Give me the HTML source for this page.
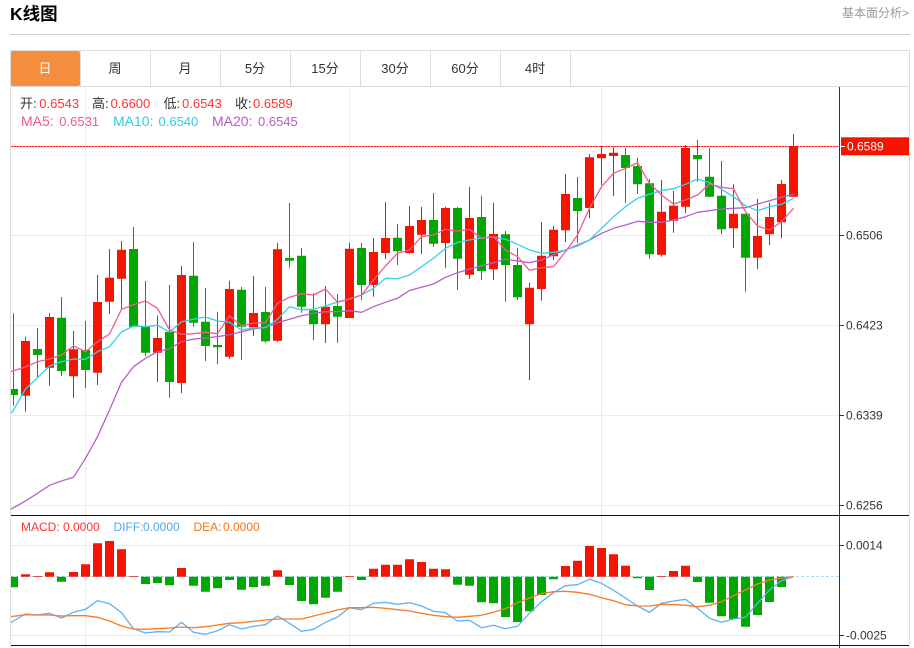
<!DOCTYPE html>
<html lang="zh">
<head>
<meta charset="utf-8">
<title>K线图</title>
<style>
html,body{margin:0;padding:0;background:#fff;width:914px;height:648px;overflow:hidden}
svg{display:block}
text{font-family:"Liberation Sans","Noto Sans CJK SC",sans-serif;font-size:12px;fill:#333}
.l{font-size:13px}
.tab{font-size:13px;text-anchor:middle}
.m{font-size:14px}
.ln{fill:none;stroke-width:1.3;stroke-linejoin:round}
</style>
</head>
<body>
<svg width="914" height="648" viewBox="0 0 914 648" xmlns="http://www.w3.org/2000/svg">
<text x="10" y="20" style="font-size:17.5px;font-weight:bold;fill:#000">K线图</text>
<text x="842" y="17" style="fill:#999">基本面分析&gt;</text>
<path d="M10 34.5H910" stroke="#ccc" fill="none"/>

<!-- frame -->
<path d="M10.5 648V50.5H909.5V648M10.5 86.5H909.5" stroke="#ddd" fill="none"/>
<path d="M80.5 51V86M150.5 51V86M220.5 51V86M290.5 51V86M360.5 51V86M430.5 51V86M500.5 51V86M570.5 51V86" stroke="#ddd" fill="none"/>
<rect x="11" y="51" width="69" height="35" rx="2" fill="#f58d3e"/>
<text class="tab" x="45" y="73" style="fill:#fff">日</text>
<text class="tab" x="115" y="73">周</text>
<text class="tab" x="185" y="73">月</text>
<text class="tab" x="255" y="73">5分</text>
<text class="tab" x="325" y="73">15分</text>
<text class="tab" x="395" y="73">30分</text>
<text class="tab" x="465" y="73">60分</text>
<text class="tab" x="535" y="73">4时</text>

<!-- grid -->
<path d="M11 235.5H839M11 325.5H839M11 415.5H839M11 505.5H839M11 545.5H839M11 635.5H839M85.5 87V648M349.5 87V648M601.5 87V648" stroke="#e6ecf1" fill="none"/>

<!-- last price line -->
<path d="M11 146.5H839" stroke="#ffa8a8" fill="none"/>
<path d="M11 146.5H839" stroke="#f81c1c" stroke-dasharray="2 1" fill="none"/>

<!-- candles red -->
<path stroke="#f01500" fill="none" d="M25.5 336.7V411.7M49.5 313V385.7M73.5 331V398M97.5 275V385M109.5 249V314M121.5 241V309M157.5 315.7V382M181.5 266V393M229.5 280.7V359M253.5 276V336M277.5 243V341.7M325.5 286V343M349.5 242.7V318M373.5 238V296.7M385.5 202V259M409.5 206V254M421.5 207V254M445.5 206.7V267.7M469.5 187V279M493.5 202.7V280M529.5 282.7V380M541.5 222V300.7M553.5 226V260M565.5 174V242M589.5 154V218M601.5 146V185M613.5 147V196M661.5 180V256.7M673.5 191V232.7M685.5 145V213M733.5 184.3V248M757.5 199V269M769.5 202.7V245M781.5 180V238.3M793.5 134V196.7"/>
<path fill="#f51400" d="M21 341H30V395.7H21ZM45 317H54V367.7H45ZM69 349.3H78V376.3H69ZM93 302H102V372.7H93ZM105 277.7H114V301.7H105ZM117 249.7H126V278.7H117ZM153 338H162V352.7H153ZM177 275H186V383H177ZM225 289H234V356.7H225ZM249 313H258V327.3H249ZM273 249.3H282V340.7H273ZM321 306.7H330V324.3H321ZM345 248.7H354V318H345ZM369 252H378V285H369ZM381 238H390V253H381ZM405 226H414V253H405ZM417 220H426V234.7H417ZM441 208H450V243H441ZM465 218H474V274.7H465ZM489 234H498V269.3H489ZM525 287.7H534V324.3H525ZM537 255.7H546V289H537ZM549 229.7H558V256.3H549ZM561 194H570V230.3H561ZM585 157.3H594V208H585ZM597 154H606V158.3H597ZM609 152.7H618V156H609ZM657 211.7H666V254.7H657ZM669 205.7H678V220.7H669ZM681 148H690V206.7H681ZM729 213.7H738V228.3H729ZM753 236H762V257.7H753ZM765 217H774V234.3H765ZM777 184H786V222.3H777ZM789 146H798V196.7H789Z"/>

<!-- candles green -->
<path stroke="#0a9a0a" fill="none" d="M13.5 313.3V405.7M37.5 328V377M61.5 297V376M85.5 321V388M133.5 227V327M145.5 281V356M169.5 285V397.7M193.5 242V326.7M205.5 288V361M217.5 311.7V364M241.5 287V360M265.5 287V342.7M289.5 203V267.7M301.5 248V312.7M313.5 293.3V340M337.5 294V342.7M361.5 243V300M397.5 224V265M433.5 193V247M457.5 207V290M481.5 195.7V280M505.5 231V301.7M517.5 247.7V300M577.5 177V243M625.5 148V203M637.5 157.7V194M649.5 179V258.7M697.5 140V181.7M709.5 148V197M721.5 161V234.3M745.5 213.7V291.7"/>
<path fill="#02a802" d="M11 389H18V395H11ZM33 349H42V355H33ZM57 317.7H66V371H57ZM81 350H90V370H81ZM129 249H138V326.7H129ZM141 326.7H150V352.7H141ZM165 332H174V382H165ZM189 275.7H198V322.7H189ZM201 321.7H210V346H201ZM213 345H222V347.3H213ZM237 289.7H246V326.7H237ZM261 312H270V341.3H261ZM285 258H294V260.7H285ZM297 255.7H306V306.7H297ZM309 310.3H318V324.3H309ZM333 306H342V316.7H333ZM357 248H366V285H357ZM393 237.7H402V251.3H393ZM429 220H438V243.7H429ZM453 208H462V258.7H453ZM477 217H486V271H477ZM501 234.3H510V265H501ZM513 265H522V297.3H513ZM573 198H582V211H573ZM621 155H630V168H621ZM633 166H642V184.3H633ZM645 183.3H654V254.3H645ZM693 155H702V159.3H693ZM705 176.7H714V196.7H705ZM717 195.7H726V229.3H717ZM741 213.7H750V257.7H741Z"/>

<!-- MA lines -->
<polyline class="ln" stroke="#b65fca" points="11,509 13.5,507.7 25.5,501 37.5,493.3 49.5,485.3 61.5,481 73.5,477.3 85.5,458.3 97.5,436.7 109.5,410 121.5,382.3 133.5,366.7 145.5,358.3 157.5,351.7 169.5,348.7 181.5,341.7 193.5,339 205.5,338 217.5,336.7 229.5,334.7 241.5,331.7 253.5,329 265.5,327.3 277.5,322.7 289.5,319.3 301.5,315.7 313.5,313.3 325.5,311.7 337.5,311.7 349.5,310.7 361.5,312.3 373.5,306.7 385.5,302.3 397.5,298.3 409.5,290.5 421.5,287.3 433.5,284 445.5,277.3 457.5,272.7 469.5,269 481.5,266 493.5,262.7 505.5,259 517.5,261 529.5,262.7 541.5,260 553.5,254.7 565.5,250 577.5,245 589.5,240 601.5,233.3 613.5,228.3 625.5,225 637.5,221.3 649.5,222.3 661.5,222.3 673.5,220 685.5,216.7 697.5,212.3 709.5,210.7 721.5,209 733.5,208.3 745.5,207.7 757.5,204 769.5,200.7 781.5,197.3 793.5,194"/>
<polyline class="ln" stroke="#38d0e6" points="11,413.3 13.5,410 25.5,389 37.5,377.7 49.5,366 61.5,361.7 73.5,359 85.5,359.3 97.5,351.7 109.5,346.7 121.5,332 133.5,326 145.5,326.7 157.5,325.3 169.5,332 181.5,321.7 193.5,319.3 205.5,317 217.5,321 229.5,322.3 241.5,330 253.5,327.7 265.5,327.7 277.5,319.3 289.5,306.7 301.5,309.7 313.5,309.3 325.5,306 337.5,302 349.5,299 361.5,295 373.5,288.3 385.5,278.3 397.5,278.7 409.5,275 421.5,266.7 433.5,258.3 445.5,248.3 457.5,242.3 469.5,240 481.5,238 493.5,237 505.5,239.3 517.5,244.3 529.5,250 541.5,253.3 553.5,252.3 565.5,250 577.5,246 589.5,240 601.5,228.3 613.5,216.7 625.5,206.7 637.5,198.3 649.5,194.3 661.5,190.7 673.5,188.7 685.5,184.3 697.5,179 709.5,182.7 721.5,189.3 733.5,196.7 745.5,205.7 757.5,210.7 769.5,206.7 781.5,204.3 793.5,198.3"/>
<polyline class="ln" stroke="#f15c90" points="11,371.7 13.5,370.7 25.5,367 37.5,361.7 49.5,359 61.5,355 73.5,346 85.5,351.7 97.5,341.7 109.5,334 121.5,309.3 133.5,304.7 145.5,301 157.5,308.3 169.5,330 181.5,334.3 193.5,333.7 205.5,332.3 217.5,333.7 229.5,315.7 241.5,325.7 253.5,323.3 265.5,322.7 277.5,303.3 289.5,297.3 301.5,293.7 313.5,295 325.5,289 337.5,302.3 349.5,299.3 361.5,295 373.5,280 385.5,266 397.5,253.3 409.5,250 421.5,236.7 433.5,235 445.5,229.3 457.5,231 469.5,229.3 481.5,238.3 493.5,236.7 505.5,250 517.5,256.7 529.5,270.3 541.5,267.7 553.5,266.7 565.5,251.7 577.5,235 589.5,208.3 601.5,186.7 613.5,173.3 625.5,168.3 637.5,162.7 649.5,183.3 661.5,195 673.5,204 685.5,200 697.5,195 709.5,184 721.5,187.3 733.5,188.7 745.5,211.7 757.5,226 769.5,230 781.5,221.7 793.5,208.3"/>

<!-- legend -->
<text class="l" x="20" y="108">开:</text><text class="l" x="39.3" y="108" style="fill:#f33">0.6543</text>
<text class="l" x="92" y="108">高:</text><text class="l" x="110.5" y="108" style="fill:#f33">0.6600</text>
<text class="l" x="163.5" y="108">低:</text><text class="l" x="182" y="108" style="fill:#f33">0.6543</text>
<text class="l" x="235" y="108">收:</text><text class="l" x="253" y="108" style="fill:#f33">0.6589</text>
<text class="m" x="21" y="126" style="fill:#f0578e">MA5:</text><text class="l" x="59.3" y="126" style="fill:#f0578e">0.6531</text>
<text class="m" x="113" y="126" style="fill:#30cde4">MA10:</text><text class="l" x="158.5" y="126" style="fill:#30cde4">0.6540</text>
<text class="m" x="212" y="126" style="fill:#b45cc8">MA20:</text><text class="l" x="258" y="126" style="fill:#b45cc8">0.6545</text>

<!-- axis -->
<path d="M839.5 87V648" stroke="#333" fill="none"/>
<path d="M840 235.5H844M840 325.5H844M840 415.5H844M840 505.5H844M840 545.5H844M840 635.5H844" stroke="#333" fill="none"/>
<rect x="841" y="137.3" width="68" height="18" fill="#f51400"/>
<path d="M841 146.5H845" stroke="#fff" fill="none"/>
<text x="847" y="150.5" style="fill:#fff">0.6589</text>
<text x="846" y="239.5">0.6506</text>
<text x="846" y="329.5">0.6423</text>
<text x="846" y="419.5">0.6339</text>
<text x="846" y="509.5">0.6256</text>
<text x="846" y="549.5">0.0014</text>
<text x="846" y="639.5">-0.0025</text>

<!-- separators -->
<path d="M11 515.5H909M11 645.5H909" stroke="#111" fill="none"/>

<!-- MACD -->
<path d="M11 576.5H839" stroke="#a9dcf5" stroke-dasharray="3 2" fill="none"/>
<path fill="#f51400" d="M21 574.3h9V576.7h-9ZM33 576h9V576.7h-9ZM45 572.3h9V576.7h-9ZM69 572h9V576.7h-9ZM81 564.3h9V576.7h-9ZM93 543.3h9V576.7h-9ZM105 541h9V576.7h-9ZM117 549.3h9V576.7h-9ZM129 576h9V576.7h-9ZM177 568h9V576.7h-9ZM273 570.3h9V576.7h-9ZM345 576h9V576.7h-9ZM369 568.7h9V576.7h-9ZM381 564.7h9V576.7h-9ZM393 564.7h9V576.7h-9ZM405 559.3h9V576.7h-9ZM417 562h9V576.7h-9ZM429 568.7h9V576.7h-9ZM441 569.3h9V576.7h-9ZM561 566h9V576.7h-9ZM573 560.7h9V576.7h-9ZM585 546h9V576.7h-9ZM597 548h9V576.7h-9ZM609 554.3h9V576.7h-9ZM621 565.7h9V576.7h-9ZM657 576h9V576.7h-9ZM669 571h9V576.7h-9ZM681 565.7h9V576.7h-9Z"/>
<path fill="#02a802" d="M11 576.7h7V587.3h-7ZM57 576.7h9V581.7h-9ZM141 576.7h9V584h-9ZM153 576.7h9V583h-9ZM165 576.7h9V585.3h-9ZM189 576.7h9V585.7h-9ZM201 576.7h9V591.7h-9ZM213 576.7h9V588.3h-9ZM225 576.7h9V580h-9ZM237 576.7h9V589.7h-9ZM249 576.7h9V587h-9ZM261 576.7h9V585.7h-9ZM285 576.7h9V585h-9ZM297 576.7h9V601h-9ZM309 576.7h9V604.3h-9ZM321 576.7h9V597.7h-9ZM333 576.7h9V591.7h-9ZM357 576.7h9V580h-9ZM453 576.7h9V584.7h-9ZM465 576.7h9V585.7h-9ZM477 576.7h9V602.3h-9ZM489 576.7h9V603.3h-9ZM501 576.7h9V617h-9ZM513 576.7h9V622h-9ZM525 576.7h9V611.3h-9ZM537 576.7h9V595h-9ZM549 576.7h9V579.3h-9ZM633 576.7h9V578.3h-9ZM645 576.7h9V590h-9ZM693 576.7h9V582h-9ZM705 576.7h9V602.7h-9ZM717 576.7h9V616.3h-9ZM729 576.7h9V619h-9ZM741 576.7h9V626.7h-9ZM753 576.7h9V615h-9ZM765 576.7h9V602h-9ZM777 576.7h9V587h-9Z"/>
<polyline class="ln" stroke="#61b1f4" points="11,622.7 13.5,621 25.5,614 37.5,615 49.5,613.3 61.5,618 73.5,612.3 85.5,609.3 97.5,600.7 109.5,603.7 121.5,612.7 133.5,628.7 145.5,633 157.5,631.7 169.5,632 181.5,622.3 193.5,632.3 205.5,634.3 217.5,630.7 229.5,624.7 241.5,629 253.5,626.3 265.5,624.7 277.5,616 289.5,623.3 301.5,631.3 313.5,629.3 325.5,622.3 337.5,617 349.5,607.7 361.5,609.7 373.5,603.3 385.5,602.3 397.5,604.3 409.5,602.7 421.5,606 433.5,611.3 445.5,612.7 457.5,621 469.5,620.3 481.5,627.7 493.5,625.3 505.5,628.7 517.5,626.3 529.5,613.3 541.5,601.7 553.5,592.7 565.5,585.7 577.5,584.7 589.5,579.3 601.5,583.3 613.5,590.3 625.5,598 637.5,606 649.5,612.3 661.5,603.3 673.5,601 685.5,599.3 697.5,608.3 709.5,618.3 721.5,622.3 733.5,619 745.5,617.3 757.5,603.3 769.5,590 781.5,580.7 793.5,576.7"/>
<polyline class="ln" stroke="#f97b25" points="11,616.7 13.5,616.3 25.5,614.7 37.5,615 49.5,615 61.5,616 73.5,615.7 85.5,615.7 97.5,617.3 109.5,621 121.5,626 133.5,629 145.5,629.3 157.5,628.7 169.5,628 181.5,627 193.5,627.7 205.5,626.7 217.5,625 229.5,623.3 241.5,622.7 253.5,621.3 265.5,620 277.5,619 289.5,619 301.5,619 313.5,616 325.5,613 337.5,610 349.5,607.7 361.5,607.7 373.5,607.3 385.5,608.3 397.5,609.7 409.5,611 421.5,613.3 433.5,615.3 445.5,616.7 457.5,617.3 469.5,616.3 481.5,615.3 493.5,612.3 505.5,608.7 517.5,602.7 529.5,598 541.5,593.7 553.5,591.7 565.5,591.3 577.5,592.3 589.5,594.3 601.5,597.7 613.5,600.7 625.5,604.7 637.5,606 649.5,606 661.5,604.3 673.5,604.7 685.5,605.3 697.5,606.7 709.5,605.3 721.5,601.7 733.5,595.7 745.5,590 757.5,584 769.5,580 781.5,578 793.5,576.7"/>

<text x="21" y="531" style="fill:#f33">MACD:</text><text x="63" y="531" style="fill:#f33">0.0000</text>
<text x="113.5" y="531" style="fill:#4aa8f0">DIFF:</text><text x="143" y="531" style="fill:#4aa8f0">0.0000</text>
<text x="193.5" y="531" style="fill:#f97316">DEA:</text><text x="223" y="531" style="fill:#f97316">0.0000</text>
</svg>
</body>
</html>
